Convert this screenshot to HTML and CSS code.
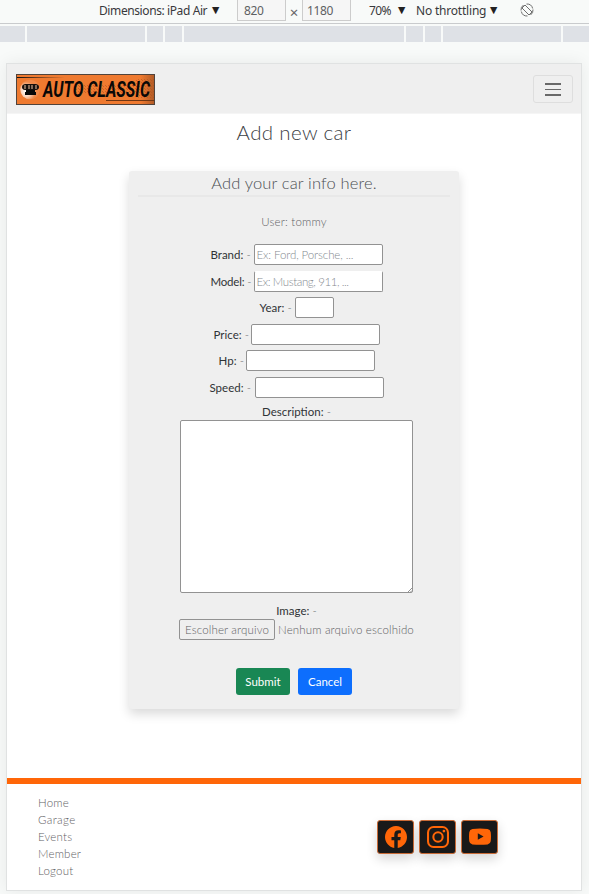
FILE: index.html
```html
<!DOCTYPE html>
<html lang="en">
<head>
<meta charset="utf-8">
<title>Auto Classic - Add new car</title>
<link rel="stylesheet" href="styles.css">
</head>
<body>
<div class="toolbar">
  <span class="tool dims">Dimensions: iPad Air</span><span class="arrow">▼</span>
  <span class="size">820</span><span class="times">×</span><span class="size second">1180</span>
  <span class="tool zoom">70%</span><span class="arrow">▼</span>
  <span class="tool throttle">No throttling</span><span class="arrow">▼</span>
  <svg class="rotate" viewBox="0 0 14 14" fill="none" stroke="#6e6e6e"><path d="M1.300 8.500A6 6 0 0 0 7.500 13M12.700 5.500A6 6 0 0 0 6.500 1M1 7.500A6 6 0 0 1 3.500 2M13 6.500A6 6 0 0 1 10.500 12"/><path d="M2 5 5 2 12 9 9 12Z"/></svg>
</div>
<div class="ruler"><i class="s1"></i><i class="s2"></i><i class="s3"></i><i class="s4"></i><i class="s5"></i><i class="s4"></i><i class="s3"></i><i class="s2"></i><i class="s6"></i></div>
<div class="device">
  <header class="navbar">
    <svg class="logo" viewBox="0 0 139 31">
      <defs>
        <linearGradient id="edge"><stop offset="0" stop-color="#ef7a30"/><stop offset=".9" stop-color="#ef7a30"/><stop offset="1" stop-color="#b05a26"/></linearGradient>
        <linearGradient id="fade"><stop offset="0" stop-color="#111"/><stop offset="1" stop-color="#111" stop-opacity="0"/></linearGradient>
        <radialGradient id="moon" cx=".3" cy=".6"><stop offset="0" stop-color="#fff"/><stop offset=".5" stop-color="#fbd5be"/><stop offset="1" stop-color="#ef8848"/></radialGradient>
        <pattern id="grain" width="3" height="3" patternUnits="userSpaceOnUse"><path d="M0 0h1v1H0zM2 2h1v1H2z" fill="#a9521f" opacity=".55"/></pattern>
      </defs>
      <rect x=".5" y=".5" width="138" height="30" fill="url(#edge)" stroke="#51433b"/>
      <rect x="60" y="10" width="62" height="9" fill="url(#grain)"/><rect x="120" y="4" width="18" height="20" fill="url(#grain)"/>
      <path d="M1 3h48v1H1z" fill="url(#fade)"/><path d="M90 26h48v1H90z" fill="#713713"/>
      <circle cx="14" cy="15.5" r="9.800" fill="url(#moon)"/>
      <path d="M9 10h11q3 .5 3 3t-3 3H9q-3-.5-3-3t3-3Z" fill="#15100d"/><path d="M10 16h9v2h1v3H9v-3h1Z" fill="#080808"/>
      <path d="M8 11.500h2v1H8zm4 0h2v1h-2zm3 0h2v1h-2zm4 0h2v1h-2zM8 13.500h2v1H8zm4 0h2v1h-2zm3 0h2v1h-2zm4 0h2v1h-2z" fill="#f0c3a5"/>
      <text x="27" y="22.500" textLength="107" lengthAdjust="spacingAndGlyphs" class="word">AUTO CLASSIC</text>
    </svg>
    <div class="menu"><i></i><i></i><i></i></div>
  </header>
  <main>
    <h1>Add new car</h1>
    <section class="card">
      <h2>Add your car info here.</h2>
      <p class="user">User: tommy</p>
      <form>
        <div class="row"><label class="w-brand"><b>Brand:</b> -</label><input placeholder="Ex: Ford, Porsche, ..."></div>
        <div class="row"><label class="w-brand tight"><b>Model:</b> -</label><input class="open" placeholder="Ex: Mustang, 911, ..."></div>
        <div class="row"><label class="w-year"><b>Year:</b> -</label><input class="short"></div>
        <div class="row"><label class="w-price"><b>Price:</b> -</label><input></div>
        <div class="row"><label class="w-hp"><b>Hp:</b> -</label><input></div>
        <div class="row"><label class="w-speed"><b>Speed:</b> -</label><input></div>
        <div class="caption"><label><b>Description:</b> -</label></div>
        <div class="area"><textarea></textarea><svg class="grip" viewBox="0 0 4 4"><path d="M0 4 4 0M2.500 4 4 2.500" stroke="#777" stroke-width=".8"/></svg></div>
        <div class="caption image"><label><b>Image:</b> -</label></div>
        <div class="file"><span class="choose">Escolher arquivo</span><span class="none">Nenhum arquivo escolhido</span></div>
        <div class="actions"><button type="button" class="submit">Submit</button><button type="button" class="cancel">Cancel</button></div>
      </form>
    </section>
  </main>
  <footer>
    <nav><a>Home</a><a class="wide">Garage</a><a>Events</a><a>Member</a><a>Logout</a></nav>
    <div class="social">
      <span><svg viewBox="0 0 16 16"><path d="M16 8.049c0-4.446-3.582-8.050-8-8.050C3.580 0-.002 3.603-.002 8.050c0 4.017 2.926 7.347 6.750 7.951v-5.625h-2.030V8.050H6.750V6.275c0-2.017 1.195-3.131 3.022-3.131.876 0 1.791.157 1.791.157v1.980h-1.009c-.993 0-1.303.621-1.303 1.258v1.510h2.218l-.354 2.326H9.250V16c3.824-.604 6.750-3.934 6.750-7.951z"/></svg></span>
      <span><svg viewBox="0 0 16 16"><rect x=".75" y=".75" width="14.500" height="14.500" rx="4" fill="none" stroke="#ff6608" stroke-width="1.500"/><circle cx="8" cy="8" r="3.400" fill="none" stroke="#ff6608" stroke-width="1.500"/><circle cx="12.300" cy="3.700" r="1"/></svg></span>
      <span><svg viewBox="0 0 16 16"><path d="M2.500 2.200Q8 1.600 13.500 2.200 15.500 2.500 15.800 4.500q.4 3.200 0 6.500-.3 2-2.300 2.400Q8 14 2.500 13.400.5 13 .2 11q-.4-3.300 0-6.500.3-2 2.300-2.300ZM6.400 5.200v4.800l4.200-2.400Z" fill-rule="evenodd"/></svg></span>
    </div>
  </footer>
</div>
</body>
</html>
```
FILE: styles.css
```css
* { box-sizing: border-box; }
body { margin: 0; height: 894px; overflow: hidden; background: #f8faf9; font: 300 11.5px/17px Lato, sans-serif; color: #5f6265; }
h1, h2, p { margin: 0; font-weight: 300; }
.toolbar { display: flex; height: 24px; border-bottom: 1px solid #c9cbcd; color: #38393c; font: 400 12px/22px "Noto Sans", sans-serif; white-space: nowrap; padding-left: 99px; }
.dims { width: 109px; letter-spacing: -.4px; }
.arrow { width: 16px; padding-left: 4px; font: 9.5px/20px "DejaVu Sans", sans-serif; color: #222; }
.size { width: 49px; height: 21px; margin-left: 13px; padding-left: 6px; border: 1px solid #ccc; border-top: 0; background: #f6f6f6; color: #5e6063; letter-spacing: -.35px; }
.times { width: 16px; text-align: center; font-size: 15px; line-height: 24px; color: #666; }
.size.second { margin-left: 0; padding-left: 4px; }
.zoom { width: 25px; margin-left: 18px; letter-spacing: -.6px; }
.throttle { width: 70px; margin-left: 6px; letter-spacing: -.2px; }
.rotate { width: 14px; height: 14px; margin: 3px 0 0 18px; flex: none; }
.ruler { display: flex; gap: 2px; height: 16px; margin-top: 2px; }
.ruler i { background: #dee1e6; flex: none; }
.s1 { width: 25px; } .s2 { width: 118px; } .s3 { width: 16px; } .s4 { width: 17px; } .s5 { width: 220px; } .s6 { width: 26px; }
.device { width: 576px; height: 828px; margin: 21px 0 0 6px; border: 1px solid #e0e2e2; background: #fff; box-shadow: 0 0 16px rgba(0,0,0,.07); }
.navbar { height: 50px; padding: 10px 8px 0 9px; background: #efefef; border-bottom: 1px solid #f5f5f5; display: flex; justify-content: space-between; }
.logo { width: 139px; height: 31px; }
.word { font: italic 700 22.500px Roboto, sans-serif; fill: #090807; }
.menu { width: 40px; height: 28px; margin-top: 1px; padding: 7px 11px; border: 1px solid #dedede; border-radius: 3px; display: flex; flex-direction: column; gap: 4px; }
.menu i { height: 1.500px; background: #696969; flex: none; }
main { height: 664px; }
h1 { height: 57px; padding-top: 4px; text-align: center; font-size: 20.500px; line-height: 28px; letter-spacing: .35px; color: #3c4044; }
.card { width: 330px; height: 538px; margin: 0 auto 0 122px; padding: 0 9px; border-radius: 3px; background: #efefef; box-shadow: 0 5px 11px rgba(0,0,0,.15); white-space: nowrap; }
h2 { height: 26px; border-bottom: 2px solid #e8e8e8; text-align: center; font-size: 16.500px; line-height: 24px; letter-spacing: .15px; color: #4b4e52; }
.user { height: 44px; padding-top: 16px; text-align: center; line-height: 18px; letter-spacing: .2px; }
form { padding-left: 5px; }
.row { height: 26.600px; padding-top: 3px; display: flex; justify-content: center; }
.row label { line-height: 21px; flex: none; }
b { font-weight: 400; color: #303336; }
.w-brand { width: 43px; } .w-year { width: 35px; } .w-price { width: 37px; } .w-hp { width: 27px; } .w-speed { width: 45px; }
.tight { letter-spacing: -.2px; }
input { width: 129px; height: 21px; padding: 0 2px; border: 1px solid #929292; border-radius: 2px; background: #fff; font: inherit; }
input::placeholder { color: #858a90; letter-spacing: -.1px; }
.open { border-top-color: #fff; }
.open::placeholder { letter-spacing: -.4px; }
.short { width: 39px; }
.caption { height: 19px; text-align: center; line-height: 21px; }
.area { position: relative; width: 233px; margin: 0 auto 0 37px; }
textarea { display: block; width: 233px; height: 173px; border: 1px solid #929292; border-radius: 2px; background: #fff; resize: none; }
.grip { position: absolute; right: 1px; bottom: 1px; width: 4px; height: 4px; }
.image { height: 26px; padding-top: 7px; }
.file { display: flex; width: 236px; margin-left: 36px; line-height: 20px; }
.choose { flex: none; width: 96px; height: 21px; border: 1px solid #929292; border-radius: 2px; text-align: center; letter-spacing: .15px; }
.none { margin-left: 3px; line-height: 22px; letter-spacing: .15px; }
.actions { display: flex; justify-content: center; gap: 8px; margin: 27px 5px 0 0; }
button { width: 54px; height: 27px; padding: 0; border: 0; border-radius: 3px; color: #fff; font: 400 11.500px/27px Lato, sans-serif; }
.submit { background: #198754; } .cancel { background: #0d6efd; }
footer { height: 111px; border-top: 6px solid #ff6608; display: flex; justify-content: space-between; }
nav { display: flex; flex-direction: column; padding: 10px 0 0 31px; letter-spacing: .2px; }
.wide { letter-spacing: .4px; }
.social { display: flex; gap: 5px; margin: 36px 83px 0 0; }
.social span { width: 37px; height: 34px; padding: 5px 7px; border: 1px solid #c96b37; border-radius: 3px; background: #191919; box-shadow: 0 5px 11px rgba(0,0,0,.16); }
.social svg { display: block; width: 22px; height: 22px; fill: #ff6608; }
```
